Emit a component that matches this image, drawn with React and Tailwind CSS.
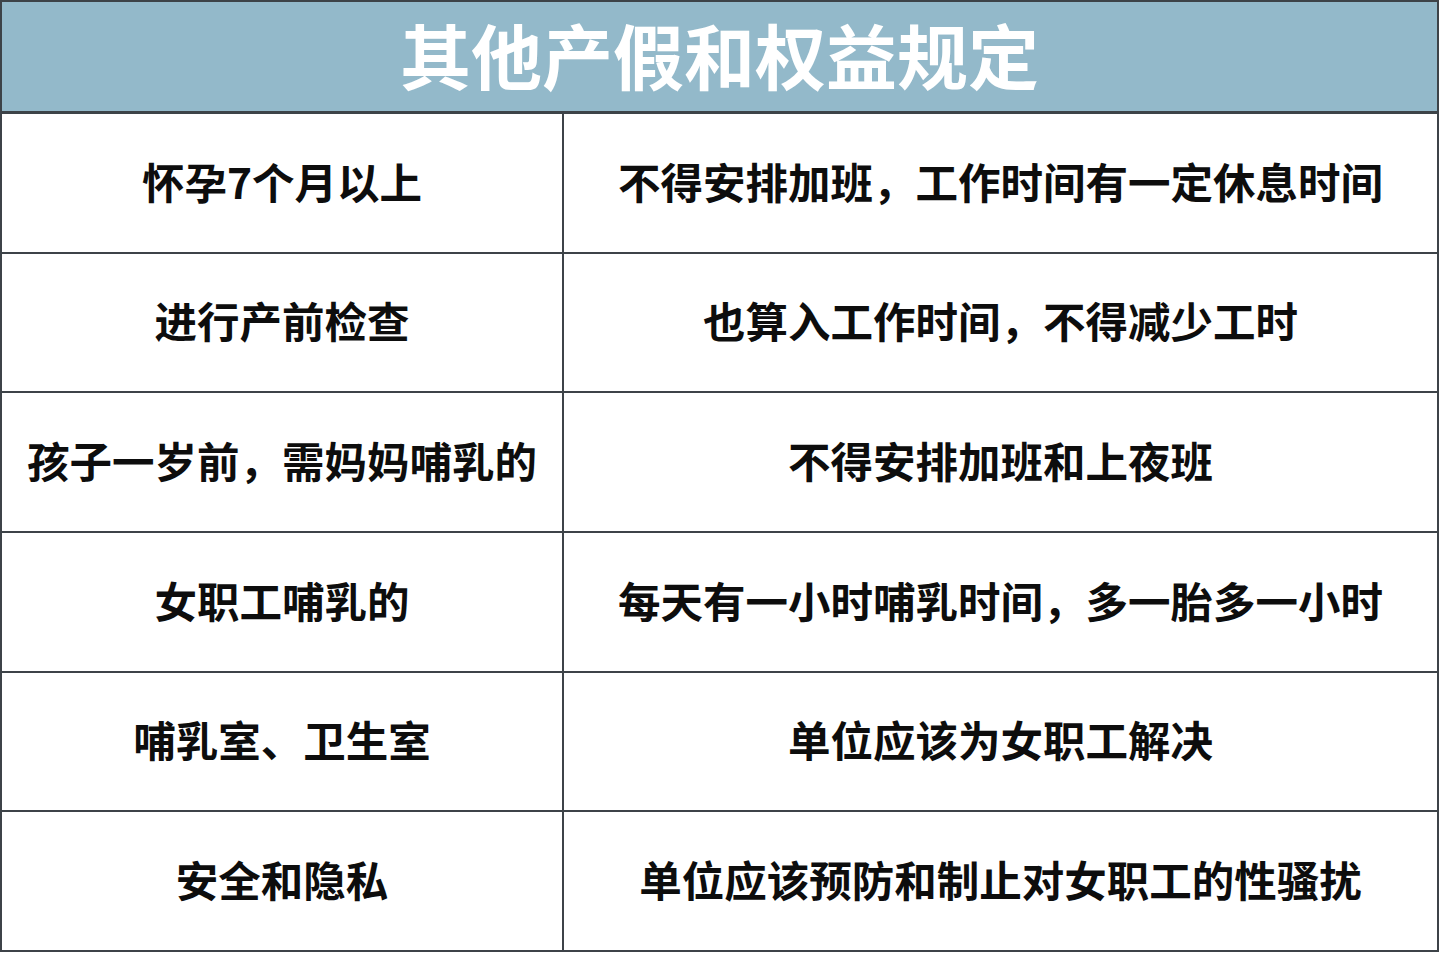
export default function App() {
  const rows = [
    ["怀孕7个月以上", "不得安排加班，工作时间有一定休息时间"],
    ["进行产前检查", "也算入工作时间，不得减少工时"],
    ["孩子一岁前，需妈妈哺乳的", "不得安排加班和上夜班"],
    ["女职工哺乳的", "每天有一小时哺乳时间，多一胎多一小时"],
    ["哺乳室、卫生室", "单位应该为女职工解决"],
    ["安全和隐私", "单位应该预防和制止对女职工的性骚扰"],
  ];
  return (
    <div
      className="w-[1440px] h-[958px] bg-white overflow-hidden"
      style={{ fontFamily: '"Noto Sans CJK SC", "Noto Sans", sans-serif' }}
    >
      <div className="w-[1439px] h-[952px] border-2 border-[#3d4348] flex flex-col">
        <div className="h-[112px] shrink-0 bg-[#93b9ca] border-b-[3px] border-[#3d4348] flex items-center justify-center">
          <span className="text-[71px] leading-none font-bold text-white -translate-y-[3px]">
            其他产假和权益规定
          </span>
        </div>
        {rows.map((r, i) => (
          <div
            key={i}
            className={
              "grid grid-cols-[562px_1fr] flex-1 " +
              (i < rows.length - 1 ? "border-b-2 border-[#3d4348]" : "")
            }
          >
            <div className="border-r-2 border-[#3d4348] flex items-center justify-center">
              <span className="text-[42.5px] leading-none font-bold text-[#0d0d0d] -translate-y-[2px]">{r[0]}</span>
            </div>
            <div className="flex items-center justify-center">
              <span className="text-[42.5px] leading-none font-bold text-[#0d0d0d] -translate-y-[2px]">{r[1]}</span>
            </div>
          </div>
        ))}
      </div>
    </div>
  );
}
